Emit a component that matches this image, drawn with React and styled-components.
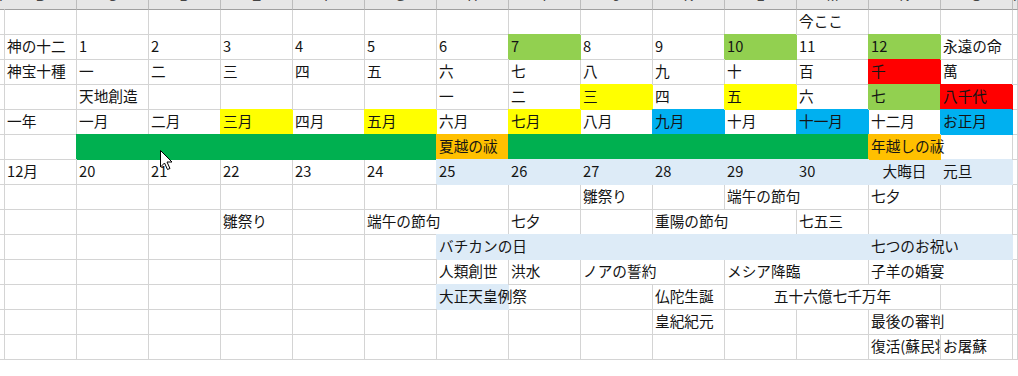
import React from 'react'
import styled, { createGlobalStyle } from 'styled-components'

// **** colours used by the sheet
const GRID = '#d4d4d4'
const G1 = '#92d050'
const G2 = '#00b050'
const YL = '#ffff00'
const RD = '#ff0000'
const BL = '#00b0f0'
const OR = '#ffc000'
const LB = '#ddebf7'

const GlobalStyle = createGlobalStyle`
  html, body {
    margin: 0;
    padding: 0;
    background: #ffffff;
  }
  body {
    font-family: "Noto Sans CJK JP", "Noto Sans", sans-serif;
    overflow: hidden;
  }
`

// **** Styled Components : Start
const Sheet = styled.div`
  position: relative;
  width: 1018px;
  height: 376px;
  display: grid;
  grid-template-columns: 5px repeat(14, 72px) 1fr;
  grid-template-rows: 10px repeat(14, 25px);
  align-content: start;
  background: #ffffff;
  overflow: hidden;
`

const HeadCell = styled.div`
  box-sizing: border-box;
  background: #e6e6e6;
  border-bottom: 1px solid #9f9f9f;
  border-right: 1px solid ${p => (p.$first ? '#e6e6e6' : '#bcbcbc')};
  overflow: hidden;
  text-align: center;
  font-family: "Liberation Sans", Arial, sans-serif;
  font-size: 14px;
  line-height: 14px;
  color: #444;

  & > span {
    display: block;
    margin-top: -11px;
  }
`

const Cell = styled.div`
  box-sizing: border-box;
  grid-column: span ${p => p.$span || 1};
  background: ${p => p.$bg || 'transparent'};
  border-right: 1px solid ${p => p.$bg || GRID};
  border-bottom: 1px solid ${p => p.$bg || GRID};
  box-shadow: ${p => (p.$bg ? `-1px -1px 0 0 ${p.$bg}` : 'none')};
  padding: 0 2px;
  font-size: 14.67px;
  line-height: 22px;
  color: #141414;
  white-space: nowrap;
  text-align: ${p => p.$align || 'left'};
  overflow: ${p => (p.$clip ? 'hidden' : 'visible')};
  position: ${p => (p.$over ? 'relative' : 'static')};
  z-index: ${p => (p.$over ? 1 : 'auto')};
`

const Cursor = styled.svg`
  position: absolute;
  left: 160px;
  top: 150px;
  width: 13px;
  height: 21px;
  z-index: 5;
`
// **** styled components : End

const COLS = 'ABCDEFGHIJKLMNOP'.split('')

const rows = [
  [{ c: 'M', t: '今ここ' }],
  [
    { c: 'B', t: '神の十二' }, { c: 'C', t: '1' }, { c: 'D', t: '2' }, { c: 'E', t: '3' },
    { c: 'F', t: '4' }, { c: 'G', t: '5' }, { c: 'H', t: '6' }, { c: 'I', t: '7', bg: G1 },
    { c: 'J', t: '8' }, { c: 'K', t: '9' }, { c: 'L', t: '10', bg: G1 }, { c: 'M', t: '11' },
    { c: 'N', t: '12', bg: G1 }, { c: 'O', t: '永遠の命' },
  ],
  [
    { c: 'B', t: '神宝十種' }, { c: 'C', t: '一' }, { c: 'D', t: '二' }, { c: 'E', t: '三' },
    { c: 'F', t: '四' }, { c: 'G', t: '五' }, { c: 'H', t: '六' }, { c: 'I', t: '七' },
    { c: 'J', t: '八' }, { c: 'K', t: '九' }, { c: 'L', t: '十' }, { c: 'M', t: '百' },
    { c: 'N', t: '千', bg: RD }, { c: 'O', t: '萬' },
  ],
  [
    { c: 'C', t: '天地創造' }, { c: 'H', t: '一' }, { c: 'I', t: '二' }, { c: 'J', t: '三', bg: YL },
    { c: 'K', t: '四' }, { c: 'L', t: '五', bg: YL }, { c: 'M', t: '六' }, { c: 'N', t: '七', bg: G1 },
    { c: 'O', t: '八千代', bg: RD },
  ],
  [
    { c: 'B', t: '一年' }, { c: 'C', t: '一月' }, { c: 'D', t: '二月' }, { c: 'E', t: '三月', bg: YL },
    { c: 'F', t: '四月' }, { c: 'G', t: '五月', bg: YL }, { c: 'H', t: '六月' }, { c: 'I', t: '七月', bg: YL },
    { c: 'J', t: '八月' }, { c: 'K', t: '九月', bg: BL }, { c: 'L', t: '十月' }, { c: 'M', t: '十一月', bg: BL },
    { c: 'N', t: '十二月' }, { c: 'O', t: 'お正月', bg: BL },
  ],
  [
    { c: 'C', t: '', bg: G2, span: 5 }, { c: 'H', t: '夏越の祓', bg: OR },
    { c: 'I', t: '', bg: G2, span: 5 }, { c: 'N', t: '年越しの祓', bg: OR, over: true },
  ],
  [
    { c: 'B', t: '12月' }, { c: 'C', t: '20' }, { c: 'D', t: '21' }, { c: 'E', t: '22' },
    { c: 'F', t: '23' }, { c: 'G', t: '24' }, { c: 'H', t: '25', bg: LB }, { c: 'I', t: '26', bg: LB },
    { c: 'J', t: '27', bg: LB }, { c: 'K', t: '28', bg: LB }, { c: 'L', t: '29', bg: LB },
    { c: 'M', t: '30', bg: LB }, { c: 'N', t: '大晦日', bg: LB, align: 'center' }, { c: 'O', t: '元旦', bg: LB },
  ],
  [{ c: 'J', t: '雛祭り' }, { c: 'L', t: '端午の節句', span: 2 }, { c: 'N', t: '七夕' }],
  [
    { c: 'E', t: '雛祭り' }, { c: 'G', t: '端午の節句', span: 2 }, { c: 'I', t: '七夕' },
    { c: 'K', t: '重陽の節句', span: 2 }, { c: 'M', t: '七五三' },
  ],
  [{ c: 'H', t: 'バチカンの日', bg: LB, span: 6 }, { c: 'N', t: '七つのお祝い', bg: LB, span: 2 }],
  [
    { c: 'H', t: '人類創世' }, { c: 'I', t: '洪水' }, { c: 'J', t: 'ノアの誓約', span: 2 },
    { c: 'L', t: 'メシア降臨', span: 2 }, { c: 'N', t: '子羊の婚宴', span: 2 },
  ],
  [
    { c: 'H', t: '大正天皇例祭', bg: LB, over: true }, { c: 'K', t: '仏陀生誕' },
    { c: 'L', t: '五十六億七千万年', span: 3, align: 'center' },
  ],
  [{ c: 'K', t: '皇紀紀元' }, { c: 'N', t: '最後の審判', span: 2 }],
  [{ c: 'N', t: '復活(蘇民将来)', clip: true }, { c: 'O', t: 'お屠蘇' }],
]

const buildRow = (cells, r) => {
  const out = []
  let i = 0
  while (i < COLS.length) {
    const cell = cells.find(x => x.c === COLS[i])
    if (cell) {
      out.push(
        <Cell
          key={`${r}-${i}`}
          $bg={cell.bg}
          $span={cell.span}
          $align={cell.align}
          $over={cell.over}
          $clip={cell.clip}
        >
          {cell.t}
        </Cell>
      )
      i += cell.span || 1
    } else {
      out.push(<Cell key={`${r}-${i}`} />)
      i += 1
    }
  }
  return out
}

const App = () => {
  return (
    <>
      <GlobalStyle />
      <Sheet>
        {COLS.map((l, i) => (
          <HeadCell key={l} $first={i === 0}>
            <span>{l}</span>
          </HeadCell>
        ))}
        {rows.map((cells, r) => buildRow(cells, r))}
        <Cursor viewBox="0 0 13 21">
          <path
            d="M0.5 0.5 L0.5 17 L4.5 13 L7.5 19.5 L10 18.5 L7 12 L12 12 Z"
            fill="#ffffff"
            stroke="#000000"
            strokeWidth="1"
            strokeLinejoin="miter"
          />
        </Cursor>
      </Sheet>
    </>
  )
}

export default App
